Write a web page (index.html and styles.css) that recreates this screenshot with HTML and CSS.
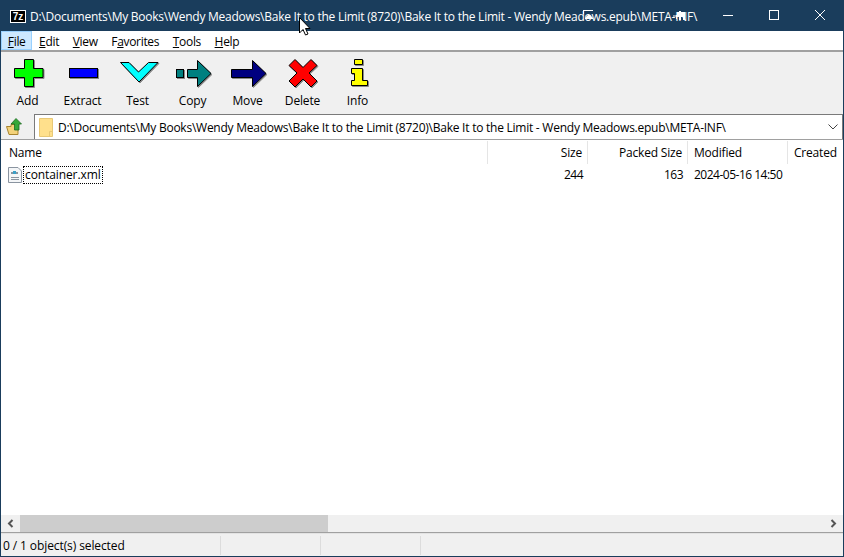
FILE: index.html
```html
<!DOCTYPE html>
<html lang="en">
<head>
  <meta charset="UTF-8" />
  <title>7-Zip File Manager</title>
  <link rel="stylesheet" href="styles.css">
</head>
<body>
  <div class="window">
    <div class="titlebar">
      <span class="app-icon">7z</span>
      <span class="title-text">D:\Documents\My Books\Wendy Meadows\Bake It to the Limit (8720)\Bake It to the Limit - Wendy Meadows.epub\META-INF\</span>
      <div class="win-buttons">
        <button class="win-btn"><svg viewBox="0 0 10 10" width="10" height="10"><path d="M0 5.500H10" stroke="#fff" fill="none"/></svg></button>
        <button class="win-btn"><svg viewBox="0 0 10 10" width="10" height="10"><rect x="0.5" y="0.5" width="9" height="9" stroke="#fff" fill="none"/></svg></button>
        <button class="win-btn"><svg viewBox="0 0 10 10" width="10" height="10"><path d="M0 0L10 10M10 0L0 10" stroke="#fff" fill="none"/></svg></button>
      </div>
      <!-- курсор и его следы поверх заголовка -->
      <svg class="cursor" viewBox="0 0 12 19" width="12" height="19"><path d="M.5.5V16L4 12.5 6.5 18 9 17 6.500 11.500H11Z" fill="#fff" stroke="#000"/></svg>
      <svg class="ghost ghost-a" viewBox="0 0 11 10" width="11" height="10"><path d="M0 0H10V1H1V4H0Z" fill="#fff"/><path d="M2 8L5 5H7L10 8V9H2Z" fill="#fff"/></svg>
      <svg class="ghost ghost-b" viewBox="0 0 13 10" width="13" height="10"><path d="M0 4.500H3V4H4V8H3V5.500H0Z" fill="#fff"/><path d="M4 1H6V0H8V1H12V9H10V6H8V9H6V6H4Z" fill="#fff"/></svg>
    </div>

    <div class="menubar">
      <span class="menu-item active"><u>F</u>ile</span>
      <span class="menu-item"><u>E</u>dit</span>
      <span class="menu-item"><u>V</u>iew</span>
      <span class="menu-item">F<u>a</u>vorites</span>
      <span class="menu-item"><u>T</u>ools</span>
      <span class="menu-item"><u>H</u>elp</span>
    </div>

    <div class="toolbar">
      <div class="tool">
        <svg viewBox="0 0 32 32" width="32" height="32"><path d="M2.500 11.500H12.500V2.500H21.500V11.500H31V20.500H21.500V29.500H12.500V20.500H2.500Z" fill="#00ff00" stroke="#000"/></svg>
        <span>Add</span>
      </div>
      <div class="tool">
        <svg viewBox="0 0 32 32" width="32" height="32"><rect x="2.500" y="11.500" width="28" height="9" fill="#0000ff" stroke="#000"/></svg>
        <span>Extract</span>
      </div>
      <div class="tool">
        <svg viewBox="0 0 40 32" width="40" height="32"><path d="M2.500 5.500H11L20.500 15 30.500 5.500H40L21 25Z" fill="#00ffff" stroke="#000"/></svg>
        <span>Test</span>
      </div>
      <div class="tool">
        <svg viewBox="0 0 36 32" width="36" height="32"><rect x="1.500" y="12.500" width="7" height="8" fill="#008080" stroke="#000"/><path d="M12.500 12.500H22.500V3.500L36 16.500 22.500 29.500V20.500H12.500Z" fill="#008080" stroke="#000"/></svg>
        <span>Copy</span>
      </div>
      <div class="tool">
        <svg viewBox="0 0 36 32" width="36" height="32"><path d="M1.500 12.500H22.500V3.500L36 16.500 22.500 29.500V20.500H1.500Z" fill="#000080" stroke="#000"/></svg>
        <span>Move</span>
      </div>
      <div class="tool">
        <svg viewBox="0 0 32 32" width="32" height="32"><path d="M8 2.500L16 10.500 24 2.500 30 8.500 22 16 30 24 24 30 16 22 8 30 2 24 10 16 2 8.500Z" fill="#ff0000" stroke="#000"/></svg>
        <span>Delete</span>
      </div>
      <div class="tool">
        <svg viewBox="0 0 32 32" width="32" height="32"><path d="M12.500 2.500H20.500V7.500H12.500ZM9.500 11.500H20.500V23.500H25.500V28.500H9.500V23.500H12.500V16.500H9.500Z" fill="#ffff00" stroke="#000"/></svg>
        <span>Info</span>
      </div>
    </div>

    <div class="addressbar">
      <button class="up-btn">
        <svg viewBox="0 0 16 18" width="16" height="18"><path d="M.5 8.500H5V6.500H12V16.500H3Z" fill="#f3d27a" stroke="#a8842f"/><path d="M10 .5L15.500 6H13V12H8.500V6H5Z" fill="#35a83a" stroke="#1c6b20" stroke-width=".8"/></svg>
      </button>
      <div class="path-box">
        <svg viewBox="0 0 14 19" width="14" height="19"><path d="M.5.500H13.500V18.500H.5Z" fill="#ffe08c" stroke="#e8c876"/><path d="M10.500 18V13.500H13" fill="none" stroke="#e8c876"/></svg>
        <span class="path-text">D:\Documents\My Books\Wendy Meadows\Bake It to the Limit (8720)\Bake It to the Limit - Wendy Meadows.epub\META-INF\</span>
        <svg class="chevron" viewBox="0 0 10 6" width="10" height="6"><path d="M.5.500L5 5 9.500.5" fill="none" stroke="#444"/></svg>
      </div>
    </div>

    <div class="list">
      <div class="list-head">
        <div class="col col-name">Name</div>
        <div class="col col-size">Size</div>
        <div class="col col-packed">Packed Size</div>
        <div class="col col-modified">Modified</div>
        <div class="col col-created">Created</div>
      </div>
      <div class="list-row">
        <div class="col col-name file-cell">
          <svg viewBox="0 0 14 16" width="14" height="16"><path d="M.5.500H10L13.500 4V15.500H.5Z" fill="#f4f6f8" stroke="#8a94a0"/><path d="M3 10.500H11M3 12.500H11" stroke="#8a94a0"/><rect x="3" y="5" width="2" height="2" fill="#8a94a0"/><rect x="5" y="4" width="3" height="3" fill="#3aa0c8"/><rect x="8" y="5" width="2" height="2" fill="#8a94a0"/></svg>
          <span class="file-name">container.xml</span>
        </div>
        <div class="col col-size">244</div>
        <div class="col col-packed">163</div>
        <div class="col col-modified">2024-05-16 14:50</div>
        <div class="col col-created"></div>
      </div>
    </div>

    <div class="hscroll">
      <span class="arrow"><svg viewBox="0 0 7 9" width="7" height="9"><path d="M5.500 1L2 4.500 5.500 8" fill="none" stroke="#555" stroke-width="2"/></svg></span>
      <div class="track"><div class="thumb"></div></div>
      <span class="arrow"><svg viewBox="0 0 7 9" width="7" height="9"><path d="M1.500 1L5 4.500 1.500 8" fill="none" stroke="#555" stroke-width="2"/></svg></span>
    </div>

    <div class="statusbar">
      <div class="st st-1">0 / 1 object(s) selected</div>
      <div class="st st-2"></div>
      <div class="st st-3"></div>
      <div class="st st-4"></div>
    </div>
  </div>
</body>
</html>
```

FILE: styles.css
```css
* { box-sizing: border-box; }
html, body { margin: 0; height: 100%; }
body { font-family: "Open Sans", "Noto Sans", sans-serif; font-size: 12px; color: #000; overflow: hidden; }

.window { width: 844px; height: 557px; display: flex; flex-direction: column; border: 1px solid #1a3d5c; border-top: 0; background: #f0f0f0; }

.titlebar { height: 31px; flex: none; display: flex; align-items: center; background: #1a3d5c; color: #fff; position: relative; padding-left: 9px; }
.app-icon { width: 16px; height: 13px; background: #000; border: 1px solid #fff; color: #fff; font: bold 10px/11px "Liberation Sans", sans-serif; text-align: center; margin-right: 4px; margin-top: 1px; }
.title-text { flex: 1; white-space: nowrap; letter-spacing: -0.25px; padding-top: 2px; }
.win-buttons { display: flex; margin-top: -1px; }
.win-btn { width: 46px; height: 31px; background: none; border: 0; padding: 0; display: flex; align-items: center; justify-content: center; }
.cursor { position: absolute; left: 298px; top: 17px; }
.ghost { position: absolute; }
.ghost-a { left: 582px; top: 10px; }
.ghost-b { left: 672px; top: 11px; }

.menubar { height: 21px; flex: none; display: flex; background: #fff; border-bottom: 2px solid #a0a0a0; }
.menu-item { padding: 2px 6.8px 0; line-height: 18px; height: 19px; letter-spacing: -0.32px; }
.menu-item.active { background: #cce8ff; outline: 1px solid #99d1ff; outline-offset: -1px; }

.toolbar { height: 62px; flex: none; display: flex; margin-left: -1px; }
.tool { width: 55px; display: flex; flex-direction: column; align-items: center; padding-top: 5px; }
.tool svg { height: 32px; flex: none; overflow: visible; filter: drop-shadow(1px 1px 0 #8a8a8a); }
.tool span { line-height: 16px; margin-top: 4px; letter-spacing: -0.15px; }

.addressbar { height: 26px; flex: none; display: flex; align-items: stretch; border-bottom: 1px solid #a0a0a0; }
.up-btn { width: 33px; background: none; border: 0; padding: 0 0 0 5px; display: flex; align-items: center; justify-content: flex-start; }
.path-box { flex: 1; background: #fff; border: 1px solid #7a7a7a; border-bottom: 0; display: flex; align-items: center; padding-left: 4px; }
.path-text { flex: 1; margin-left: 5px; white-space: nowrap; letter-spacing: -0.245px; }
.chevron { margin-right: 4px; }

.list { flex: 1; background: #fff; min-height: 0; }
.list-head, .list-row { display: flex; }
.list-head { height: 25px; padding-top: 1px; }
.list-head .col { height: 23px; line-height: 23px; border-right: 1px solid #e5e5e5; }
.list-head .col-created { border-right: 0; }
.list-row { height: 20px; line-height: 20px; }
.col { flex: none; padding: 0 5px; white-space: nowrap; letter-spacing: -0.2px; }
.list-row .col { letter-spacing: -0.5px; }
.col-name { width: 487px; padding-left: 8px; }
.col-size { width: 100px; text-align: right; }
.col-packed { width: 100px; text-align: right; }
.col-modified { width: 100px; padding-left: 6px; }
.col-created { width: 56px; padding-left: 6px; }
.file-cell { display: flex; align-items: center; padding-left: 7px; }
.list-row .file-name { margin-left: 1px; outline: 1px dotted #000; outline-offset: -1px; padding: 0 2px; line-height: 18px; height: 18px; letter-spacing: -0.1px; }

.hscroll { height: 17px; flex: none; display: flex; background: #f0f0f0; }
.arrow { width: 19px; display: flex; align-items: center; justify-content: center; }
.track { flex: 1; }
.thumb { width: 308px; height: 100%; background: #cdcdcd; }

.statusbar { height: 24px; flex: none; display: flex; border-top: 1px solid #a0a0a0; box-shadow: inset 0 1px 0 #e3e3e3; padding-top: 3px; }
.st { line-height: 20px; border-right: 1px solid #dcdcdc; padding-left: 2px; letter-spacing: -0.1px; white-space: nowrap; height: 19px; }
.st-1 { width: 220px; }
.st-2, .st-3 { width: 100px; }
.st-4 { flex: 1; border-right: 0; }
```
